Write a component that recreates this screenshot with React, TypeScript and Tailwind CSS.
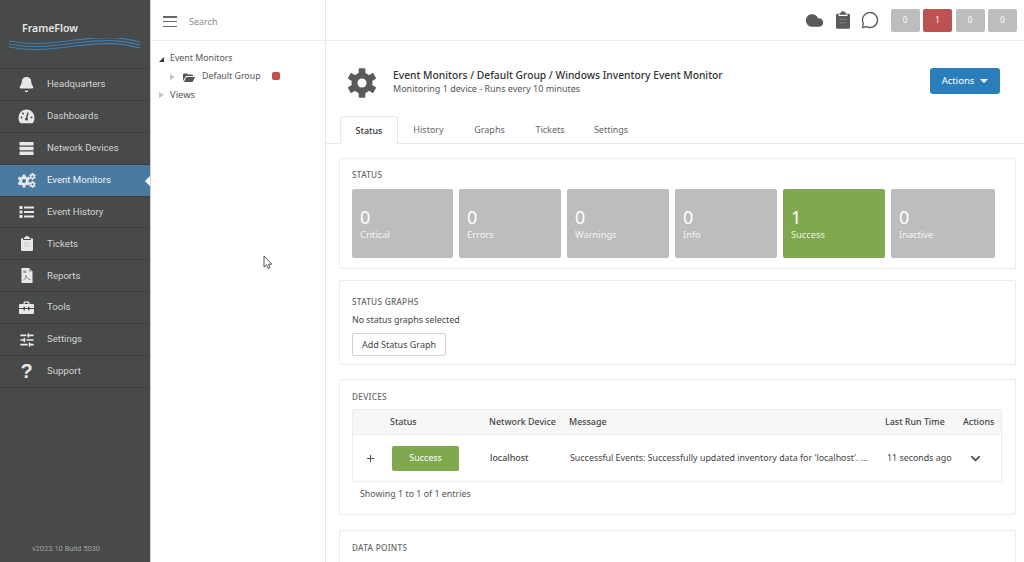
import { Bell, ChevronDown, Cloud, MessageCircle, Plus, SlidersHorizontal } from "lucide-react"
import type { ReactNode } from "react"

const navItems = [
  { label: "Headquarters", icon: <Bell size={17} fill="#e8e8e8" strokeWidth={1.5} /> },
  { label: "Dashboards", icon: <GaugeIcon /> },
  { label: "Network Devices", icon: <ServerIcon /> },
  { label: "Event Monitors", icon: <GearsIcon />, active: true },
  { label: "Event History", icon: <ListIcon /> },
  { label: "Tickets", icon: <ClipIcon width={12} height={15} color="#e8e8e8" line="#b8b8b8" /> },
  { label: "Reports", icon: <ReportIcon /> },
  { label: "Tools", icon: <ToolsIcon /> },
  { label: "Settings", icon: <SlidersHorizontal size={16} strokeWidth={2.5} /> },
  { label: "Support", icon: <span className="text-[20px] font-bold leading-none font-['Liberation_Sans',sans-serif]">?</span> },
]

const statusCards = [
  { value: "0", label: "Critical", width: "w-[101px]" },
  { value: "0", label: "Errors", width: "w-[102px]" },
  { value: "0", label: "Warnings", width: "w-[102px]" },
  { value: "0", label: "Info", width: "w-[102px]" },
  { value: "1", label: "Success", width: "w-[102px]", green: true },
  { value: "0", label: "Inactive", width: "w-[104px]" },
]

function GaugeIcon() {
  return (
    <svg width="17" height="15" viewBox="0 0 17 15">
      <path d="M8.5 0.5a8 8 0 0 1 8 8c0 2.3-.7 4.300-1.800 5.800H2.300C1.200 12.800.5 10.800.5 8.500a8 8 0 0 1 8-8z" fill="#e8e8e8" />
      <path d="M8.500 9.500L10 3.500" stroke="#474a49" strokeWidth="1.400" />
      <circle cx="8.500" cy="10" r="1.500" fill="#474a49" />
      <circle cx="3.500" cy="8.500" r="1" fill="#474a49" />
      <circle cx="5" cy="4.500" r="1" fill="#474a49" />
      <circle cx="13.500" cy="8.500" r="1" fill="#474a49" />
    </svg>
  )
}

function ServerIcon() {
  return (
    <svg width="15" height="13" viewBox="0 0 15 13" fill="#e8e8e8">
      <rect x="0.500" y="0" width="14" height="3.600" rx="0.600" />
      <rect x="0.500" y="4.700" width="14" height="3.600" rx="0.600" />
      <rect x="0.500" y="9.400" width="14" height="3.600" rx="0.600" />
    </svg>
  )
}

function ListIcon() {
  return (
    <svg width="15" height="12" viewBox="0 0 15 12" fill="#e8e8e8">
      <rect x="0.500" y="0" width="3" height="3" />
      <rect x="0.500" y="4.500" width="3" height="3" />
      <rect x="0.500" y="9" width="3" height="3" />
      <rect x="5" y="0.500" width="10" height="2" />
      <rect x="5" y="5" width="10" height="2" />
      <rect x="5" y="9.500" width="10" height="2" />
    </svg>
  )
}

function ClipIcon({ width, height, color, line }: { width: number; height: number; color: string; line: string }) {
  return (
    <svg width={width} height={height} viewBox="0 0 12 15">
      <path d="M4 1.500A2 1.500 0 0 1 8 1.500H9V3H3V1.500zM1 2.200H2.200V4H9.800V2.200H11a1 1 0 0 1 1 1V14a1 1 0 0 1-1 1H1a1 1 0 0 1-1-1V3.200a1 1 0 0 1 1-1z" fill={color} />
      <path d="M3 7h6M3 10h6" stroke={line} strokeWidth="0.700" />
    </svg>
  )
}

function ReportIcon() {
  return (
    <svg width="12" height="15" viewBox="0 0 12 15">
      <path d="M0.500 0H8L11.500 3.500V15H0.500z" fill="#e8e8e8" />
      <path d="M8 0V3.500H11.500" fill="#9a9a9a" />
      <path d="M2.500 12C4 11.500 5 9 5 7.500 5.500 9.500 7 11.500 9.500 11.500" stroke="#6a6a6a" strokeWidth="0.800" fill="none" />
      <rect x="2.300" y="2.500" width="3" height="2.500" fill="#9a9a9a" />
    </svg>
  )
}

function ToolsIcon() {
  return (
    <svg width="15" height="13" viewBox="0 0 15 13" fill="#e8e8e8">
      <path d="M4.500 3V1.500A1 1 0 0 1 5.500.5h4a1 1 0 0 1 1 1V3H9.300V1.800H5.700V3z" />
      <path d="M1 3H14a1 1 0 0 1 1 1V7H10.500V5.800H9V7H6V5.800H4.500V7H0V4a1 1 0 0 1 1-1z" />
      <path d="M0 8H4.500V9.200H6V8H9V9.200H10.500V8H15V12a1 1 0 0 1-1 1H1a1 1 0 0 1-1-1z" />
    </svg>
  )
}

function CogShape({ cx, cy, r, hole }: { cx: number; cy: number; r: number; hole: string }) {
  const teeth = [0, 60, 120, 180, 240, 300]
  return (
    <g>
      {teeth.map((a) => (
        <rect
          key={a}
          x={cx - r * 0.28}
          y={cy - r * 1.22}
          width={r * 0.56}
          height={r * 0.6}
          rx={r * 0.08}
          transform={`rotate(${a} ${cx} ${cy})`}
          fill="currentColor"
        />
      ))}
      <circle cx={cx} cy={cy} r={r * 0.88} fill="currentColor" />
      <circle cx={cx} cy={cy} r={r * 0.38} fill={hole} />
    </g>
  )
}

function GearsIcon() {
  return (
    <svg width="18" height="15" viewBox="0 0 18 15" className="text-[#e8e8e8]">
      <CogShape cx={6} cy={8} r={5.300} hole="#4b7aa0" />
      <CogShape cx={14.500} cy={3.500} r={2.800} hole="#4b7aa0" />
      <CogShape cx={14.500} cy={11.500} r={2.800} hole="#4b7aa0" />
    </svg>
  )
}

function Logo() {
  const waves = [0, 3, 6]
  return (
    <div className="flex flex-col">
      <div className="ml-[22px] text-[10.500px] font-semibold leading-none text-[#e6e6e6] font-['Noto_Sans',sans-serif]">FrameFlow</div>
      <svg width="132" height="16" viewBox="0 0 132 16" className="ml-[9px] mt-[4px]">
        {waves.map((y) => (
          <path
            key={y}
            d={`M0 ${3 + y}C22 ${7 + y} 35 ${6 + y} 66 ${2 + y}S112 ${-1 + y} 131 ${4 + y}`}
            fill="none"
            stroke="#3f7fb0"
            strokeWidth="1.200"
          />
        ))}
      </svg>
    </div>
  )
}

function Panel({ title, className, children }: { title: string; className: string; children?: ReactNode }) {
  return (
    <section className={`mr-[8px] ml-[13px] rounded-[2px] border border-[#ececec] bg-white pr-[13px] pl-[12px] ${className}`}>
      <h3 className="text-[8.200px] leading-[12px] font-medium tracking-[0.3px] text-[#666]">{title}</h3>
      {children}
    </section>
  )
}

export default function App() {
  return (
    <div className="relative flex h-[562px] w-[1024px] overflow-hidden bg-white font-['Noto_Sans',sans-serif] text-[#333]">
      <aside className="flex h-full w-[151px] shrink-0 flex-col border-r border-[#cfcfcf] bg-[#474a49] font-['Roboto',sans-serif]">
        <div className="h-[68px] shrink-0 pt-[23px]">
          <Logo />
        </div>
        <nav className="border-t border-[#3c3e3d]">
          {navItems.map((item) => (
            <div
              key={item.label}
              className={`relative flex h-[31.900px] items-center border-b border-[#3c3e3d] text-[9.600px] ${
                item.active ? "bg-[#4b7aa0] text-[#eef2f5]" : "text-[#d4d4d4]"
              }`}
            >
              <span className="flex w-[47px] shrink-0 justify-center pr-[1px] pl-[7px] text-[#e8e8e8]">
                <span className="flex w-[20px] justify-center">{item.icon}</span>
              </span>
              {item.label}
              {item.active && (
                <span className="absolute top-[11px] right-0 h-0 w-0 border-y-[5px] border-r-[5px] border-y-transparent border-r-white" />
              )}
            </div>
          ))}
        </nav>
        <div className="mt-auto pr-[18px] pb-[8px] text-center text-[7.500px] text-[#a3a3a3]">v2023.10 Build 5030</div>
      </aside>

      <div className="h-full w-[175px] shrink-0 border-r border-[#e8e8e8]">
        <div className="flex h-[41px] items-center border-b border-[#ececec] pt-[3px] pl-[12px]">
          <span className="flex h-[11px] w-[14px] flex-col justify-between">
            <span className="h-[1.500px] bg-[#666]" />
            <span className="h-[1.500px] bg-[#666]" />
            <span className="h-[1.500px] bg-[#666]" />
          </span>
          <span className="ml-[12px] text-[9px] text-[#8a8a8a]">Search</span>
        </div>
        <div className="pt-[9px] text-[8.800px] text-[#555]">
          <div className="flex h-[18px] items-center pl-[8px]">
            <span className="mr-[6px] h-0 w-0 border-b-[5px] border-l-[5px] border-b-[#333] border-l-transparent" />
            Event Monitors
          </div>
          <div className="flex h-[18px] items-center pl-[19px]">
            <span className="h-0 w-0 border-y-[3px] border-l-[5px] border-y-transparent border-l-[#c4c4c4]" />
            <svg width="12" height="9" viewBox="0 0 12 9" className="ml-[8px]">
              <path d="M0 1.500A1 1 0 0 1 1 .5h3l1 1h4a1 1 0 0 1 1 1V3H3L0 8zM3.400 4H12l-2.400 5H.8z" fill="#555" />
            </svg>
            <span className="ml-[7px]">Default Group</span>
            <span className="mb-[3px] ml-[11px] h-[8px] w-[8px] rounded-[2px] bg-[#c34f4f]" />
          </div>
          <div className="flex h-[18px] items-center pl-[8px]">
            <span className="h-0 w-0 border-y-[3px] border-l-[5px] border-y-transparent border-l-[#c4c4c4]" />
            <span className="ml-[6px] text-[9.400px]">Views</span>
          </div>
        </div>
      </div>

      <main className="min-w-0 flex-1">
        <div className="flex h-[41px] items-center justify-end border-b border-[#ececec] pr-[7px]">
          <Cloud size={19} fill="#5a5a5a" stroke="#5a5a5a" />
          <span className="ml-[12px] flex"><ClipIcon width={14} height={18} color="#5a5a5a" line="#8a8a8a" /></span>
          <MessageCircle size={18} stroke="#5a5a5a" strokeWidth={1.800} className="ml-[11px]" />
          <div className="ml-[12px] flex gap-[3.500px] text-[8px] text-white">
            <span className="flex h-[23px] w-[29px] items-center justify-center rounded-[2px] bg-[#bdbdbd]">0</span>
            <span className="flex h-[23px] w-[29px] items-center justify-center rounded-[2px] bg-[#bc5252]">1</span>
            <span className="flex h-[23px] w-[29px] items-center justify-center rounded-[2px] bg-[#bdbdbd]">0</span>
            <span className="flex h-[23px] w-[29px] items-center justify-center rounded-[2px] bg-[#bdbdbd]">0</span>
          </div>
        </div>

        <div className="flex h-[75px] items-start pt-[27px] pr-[24px] pl-[21px]">
          <svg width="30" height="30" viewBox="0 0 30 30" className="text-[#5a5a5a]">
            <CogShape cx={15} cy={15} r={12} hole="#ffffff" />
          </svg>
          <div className="ml-[16px] flex-1">
            <div className="text-[10.280px] leading-[14px] font-medium text-[#333]">Event Monitors / Default Group / Windows Inventory Event Monitor</div>
            <div className="text-[9px] leading-[13px] text-[#555]">Monitoring 1 device - Runs every 10 minutes</div>
          </div>
          <button className="flex h-[26px] w-[70px] items-center justify-center gap-[6px] rounded-[3px] bg-[#2a7fba] text-[9.500px] text-white">
            Actions
            <span className="h-0 w-0 border-x-[4px] border-t-[4px] border-x-transparent border-t-white" />
          </button>
        </div>

        <div className="flex h-[28px] items-stretch border-b border-[#e8e8e8] pl-[14px] text-[9px] text-[#666]">
          <span className="-mb-[1px] flex w-[58px] items-center justify-center rounded-t-[3px] border border-b-0 border-[#e8e8e8] bg-white font-medium text-[#333]">Status</span>
          <span className="flex w-[61px] items-center justify-center">History</span>
          <span className="flex w-[61px] items-center justify-center">Graphs</span>
          <span className="flex w-[60px] items-center justify-center">Tickets</span>
          <span className="flex w-[62px] items-center justify-center">Settings</span>
        </div>

        <Panel title="STATUS" className="mt-[14px] h-[111px] pt-[10px]">
          <div className="mt-[8px] flex gap-[6px]">
            {statusCards.map((c) => (
              <div key={c.label} className={`h-[69px] rounded-[2px] px-[8px] pt-[16px] text-white ${c.width} ${c.green ? "bg-[#7fa84f]" : "bg-[#bdbdbd]"}`}>
                <div className="text-[18px] leading-[24px]">{c.value}</div>
                <div className="text-[9.300px] leading-[12px] opacity-85">{c.label}</div>
              </div>
            ))}
          </div>
        </Panel>

        <Panel title="STATUS GRAPHS" className="mt-[11px] h-[85px] pt-[15px]">
          <div className="mt-[6px] text-[8.850px] leading-[13px] text-[#444]">No status graphs selected</div>
          <button className="mt-[6px] h-[23px] w-[94px] rounded-[2px] border border-[#d0d0d0] bg-white text-[9px] text-[#444]">Add Status Graph</button>
        </Panel>

        <Panel title="DEVICES" className="mt-[14px] h-[136px] pt-[11px]">
          <div className="mt-[6px] overflow-hidden rounded-[2px] border border-[#ececec] text-[8.900px]">
            <div className="grid h-[25px] grid-cols-[37px_99px_80px_316px_78px_1fr] items-center border-b border-[#ececec] bg-[#f7f7f7] font-medium text-[#444]">
              <span />
              <span>Status</span>
              <span>Network Device</span>
              <span>Message</span>
              <span>Last Run Time</span>
              <span>Actions</span>
            </div>
            <div className="grid h-[46px] grid-cols-[39px_98px_80px_315px_77px_1fr] items-center text-[#444]">
              <span className="flex justify-center pr-[5px]"><Plus size={11} stroke="#555" strokeWidth={2.200} /></span>
              <span className="flex h-[25px] w-[67px] items-center justify-center rounded-[2px] bg-[#7fa84f] text-white">Success</span>
              <span className="font-medium">localhost</span>
              <span className="whitespace-nowrap">Successful Events: Successfully updated inventory data for 'localhost'. ...</span>
              <span className="pl-[2px]">11 seconds ago</span>
              <span className="pl-[6px]"><ChevronDown size={15} stroke="#444" strokeWidth={2.500} /></span>
            </div>
          </div>
          <div className="mt-[5px] pl-[8px] text-[8.900px] leading-[13px] text-[#555]">Showing 1 to 1 of 1 entries</div>
        </Panel>

        <Panel title="DATA POINTS" className="mt-[15px] h-[60px] pt-[11px]" />
      </main>

      <svg width="11" height="15" viewBox="0 0 11 15" className="absolute top-[255px] left-[263px]">
        <path d="M1 1V12L3.500 9.800 5.200 13.500 7 12.700 5.400 9.200H8.800z" fill="#fff" stroke="#444" strokeWidth="0.900" />
      </svg>
    </div>
  )
}
